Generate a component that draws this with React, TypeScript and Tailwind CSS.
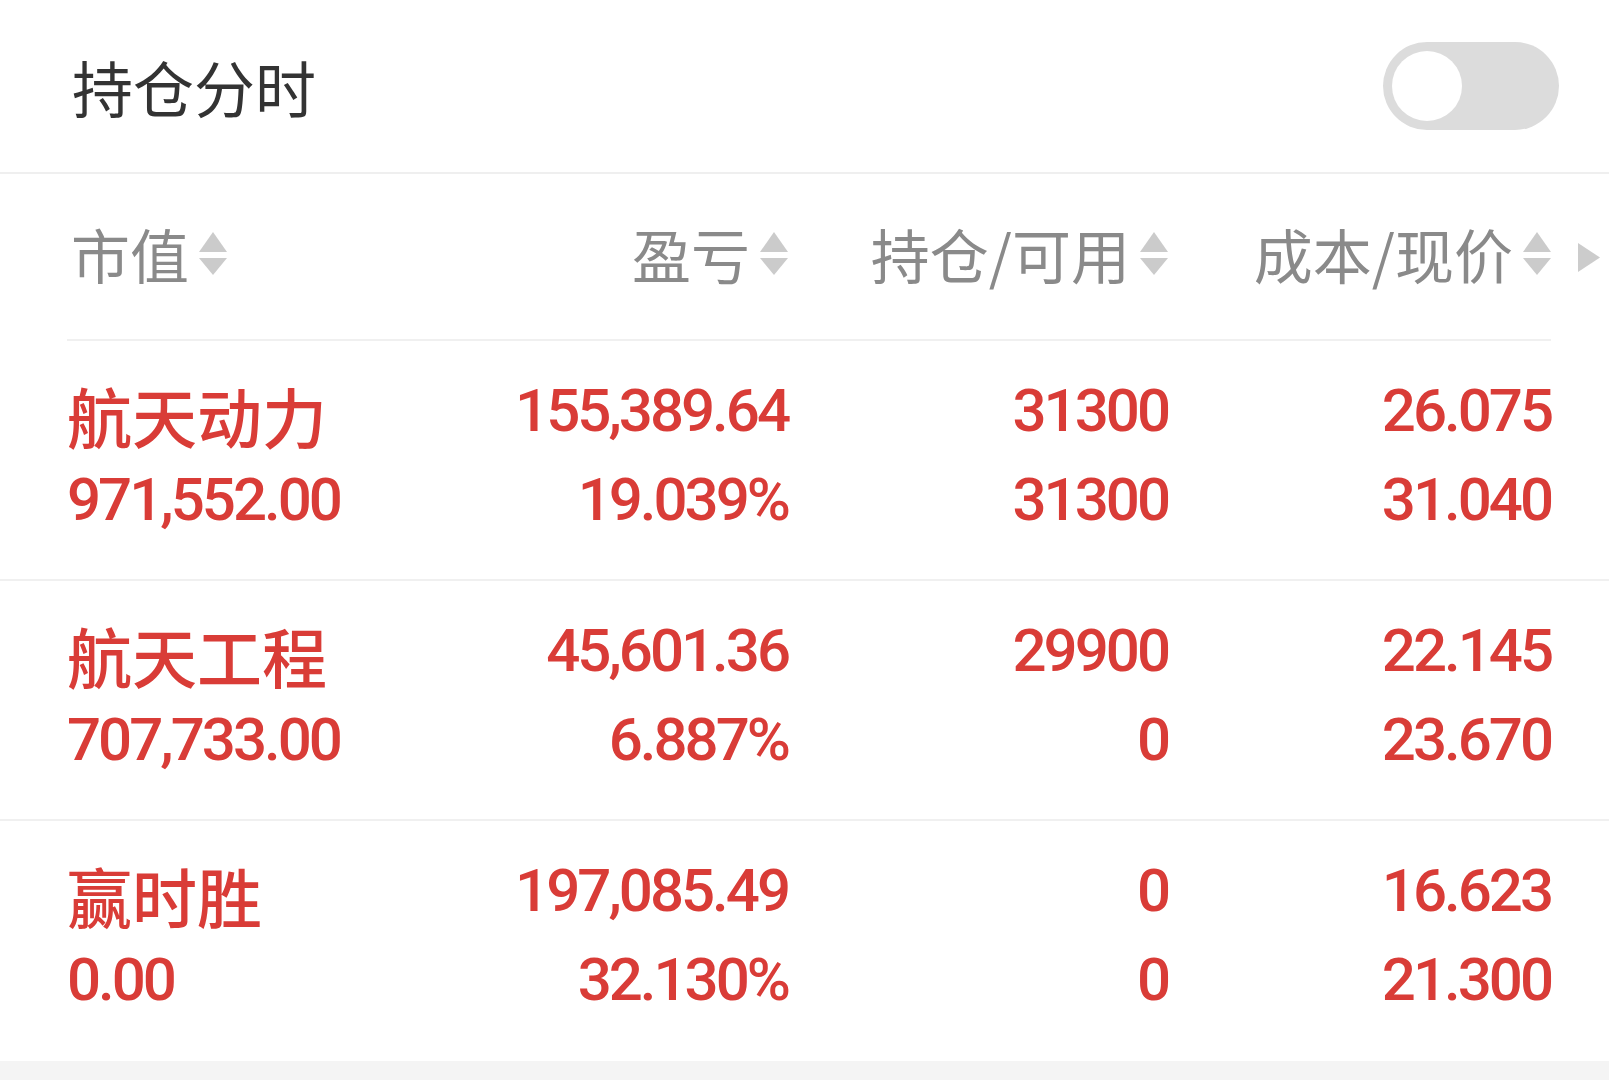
import { useState } from 'react';

type Holding = {
  name: string;
  marketValue: string;
  profit: string;
  profitRate: string;
  position: string;
  available: string;
  cost: string;
  price: string;
};

const holdings: Holding[] = [
  {
    name: '航天动力',
    marketValue: '971,552.00',
    profit: '155,389.64',
    profitRate: '19.039%',
    position: '31300',
    available: '31300',
    cost: '26.075',
    price: '31.040'
  },
  {
    name: '航天工程',
    marketValue: '707,733.00',
    profit: '45,601.36',
    profitRate: '6.887%',
    position: '29900',
    available: '0',
    cost: '22.145',
    price: '23.670'
  },
  {
    name: '赢时胜',
    marketValue: '0.00',
    profit: '197,085.49',
    profitRate: '32.130%',
    position: '0',
    available: '0',
    cost: '16.623',
    price: '21.300'
  }
];

const cjk = "font-['Noto_Sans_CJK_SC',sans-serif]";
const num = "font-['Roboto','Noto_Sans_CJK_SC',sans-serif] tracking-[-3px]";

export default function App() {
  const [enabled, setEnabled] = useState(false);

  return (
    <div className="min-h-screen w-full bg-white">
      <div className="flex h-[174px] items-center justify-between border-b-2 border-[#efefef] pl-[72px] pr-[50px]">
        <h1 className={`${cjk} text-[61px] leading-none text-[#333333]`}>持仓分时</h1>
        <button
          type="button"
          onClick={() => setEnabled(!enabled)}
          className={`flex h-[88px] w-[176px] items-center rounded-full p-[9px] ${enabled ? 'justify-end bg-[#e03c36]' : 'justify-start bg-[#dcdcdc]'}`}
        >
          <span className="block h-[70px] w-[70px] rounded-full bg-white" />
        </button>
      </div>

      <div className="flex items-center pl-[67px] pr-[9px]">
        <div className="grid h-[167px] w-[1484px] grid-cols-[400px_321px_380px_383px] items-center border-b-2 border-[#f0f0f0] pb-[6px]">
          <HeaderCell label="市值" align="left" />
          <HeaderCell label="盈亏" />
          <HeaderCell label="持仓/可用" />
          <HeaderCell label="成本/现价" />
        </div>
        <svg width="22" height="29" viewBox="0 0 22 29" className="ml-[27px] shrink-0">
          <polygon points="0,0 22,14.5 0,29" fill="#cccccc" />
        </svg>
      </div>

      {holdings.map((item, index) => (
        <div
          key={item.name}
          className={`h-[240px] pl-[67px] pr-[58px] pt-[25px] ${index < holdings.length - 1 ? 'border-b-2 border-[#f0f0f0]' : ''}`}
        >
          <div className="grid grid-cols-[400px_321px_380px_383px] text-[#d93c37]">
            <div>
              <div className={`${cjk} h-[89px] pt-[5px] text-[65px] font-medium leading-[89px]`}>{item.name}</div>
              <div className={`${num} h-[89px] text-[60px] font-medium leading-[89px]`}>{item.marketValue}</div>
            </div>
            <ValueCell top={item.profit} bottom={item.profitRate} />
            <ValueCell top={item.position} bottom={item.available} />
            <ValueCell top={item.cost} bottom={item.price} />
          </div>
        </div>
      ))}

      <div className="h-[19px] bg-[#f4f4f4]" />
    </div>
  );
}

function HeaderCell({ label, align = 'right' }: { label: string; align?: 'left' | 'right' }) {
  return (
    <div className={`flex items-center gap-[10px] ${align === 'left' ? 'justify-start pl-[4px]' : 'justify-end'}`}>
      <span className={`${cjk} text-[59px] leading-none text-[#8a8a8a]`}>{label}</span>
      <SortIcon />
    </div>
  );
}

function SortIcon() {
  return (
    <svg width="28" height="44" viewBox="0 0 28 44" className="shrink-0">
      <polygon points="14,0 28,20 0,20" fill="#cbcbcb" />
      <polygon points="0,26 28,26 14,43" fill="#cbcbcb" />
    </svg>
  );
}

function ValueCell({ top, bottom }: { top: string; bottom: string }) {
  return (
    <div className={`${num} text-right text-[60px] font-medium leading-[89px]`}>
      <div className="h-[89px]">{top}</div>
      <div className="h-[89px]">{bottom}</div>
    </div>
  );
}
